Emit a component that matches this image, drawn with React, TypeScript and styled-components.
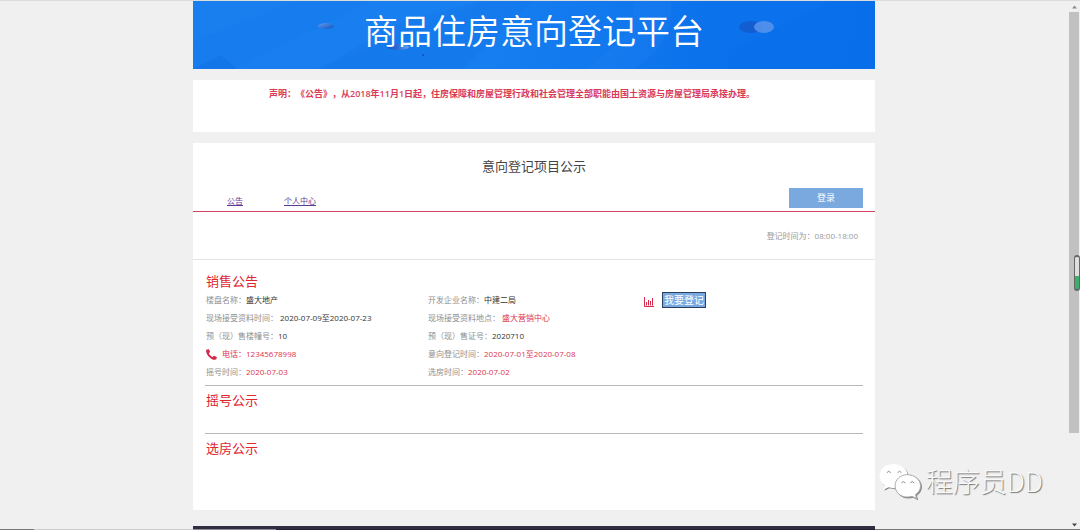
import React from "react";
import styled, { createGlobalStyle } from "styled-components";

const Global = createGlobalStyle`
  *, *::before, *::after { box-sizing: border-box; }
  html, body { margin: 0; padding: 0; }
  body {
    background: #f0f0f0;
    font-family: "Open Sans", "Noto Sans CJK SC", sans-serif;
    font-size: 8px;
    line-height: 18px;
    color: #444;
    text-spacing-trim: space-all;
  }
  h1, h2, h3, p, dl, dt, dd { margin: 0; font-weight: 400; }
`;

const Screen = styled.div`
  position: relative;
  min-height: 100vh;
  display: flex;
  flex-direction: column;
  border-top: 1px solid #dcdcdc;
`;

const Viewport = styled.div`
  flex: 1;
  display: flex;
`;

const Page = styled.div`
  flex: 1;
  min-width: 0;
  display: flex;
  flex-direction: column;
  align-items: center;
`;

const Column = styled.div`
  width: 100%;
  max-width: 682px;
  flex: 1;
  display: flex;
  flex-direction: column;
  gap: 11px;
`;

const Banner = styled.header`
  position: relative;
  overflow: hidden;
  background: linear-gradient(100deg, #177cee 0%, #167ef0 45%, #0c72ec 75%, #0a70ec 100%);
  padding: 4px 0 14px;
`;

const BannerArt = styled.svg`
  position: absolute;
  inset: 0;
  width: 100%;
  height: 100%;
`;

const BannerTitle = styled.h1`
  position: relative;
  text-align: center;
  font-family: "Noto Sans CJK SC", sans-serif;
  font-size: 34px;
  line-height: 50px;
  font-weight: 350;
  color: #fff;
`;

const Notice = styled.section`
  background: #fff;
  padding: 5px 76px 29px;
  font-size: 9px;
  font-weight: 600;
  color: #d93a58;
`;

const Panel = styled.main`
  background: #fff;
  padding-bottom: 52px;
`;

const PanelTitle = styled.h2`
  padding: 13px 0 12px;
  text-align: center;
  font-size: 13px;
  line-height: 20px;
`;

const Nav = styled.nav`
  display: flex;
  align-items: flex-end;
  gap: 41px;
  padding: 0 12px 3px 34px;
  border-bottom: 1px solid #d4425f;
`;

const NavLink = styled.a`
  line-height: 14px;
  color: #5a3a94;
  text-decoration: underline;
`;

const LoginButton = styled.button`
  margin-left: auto;
  width: 74px;
  height: 20px;
  padding: 0;
  border: 0;
  background: #7aa9df;
  color: #fff;
  font: inherit;
  font-size: 9px;
  cursor: pointer;
`;

const Hours = styled.p`
  padding: 15px 17px 14px;
  border-bottom: 1px solid #e4e4e4;
  text-align: right;
  color: #999;
`;

const Body = styled.div`
  padding: 11px 12px 0;
`;

const Section = styled.section<{ $divided?: boolean }>`
  padding: ${(p) => (p.$divided ? "4px 1px 0" : "0 1px")};
  border-top: ${(p) => (p.$divided ? "1px solid #bdb7ba" : "0")};
  & + & { margin-top: 4px; }
  & + & + & { margin-top: 23px; }
`;

const SectionTitle = styled.h3`
  font-size: 13px;
  line-height: 20px;
  color: #e0262f;
`;

const Details = styled.div`
  display: grid;
  grid-template-columns: 222px 216px 1fr;
`;

const Facts = styled.dl``;

const Fact = styled.div<{ $spaced?: boolean }>`
  display: flex;
  align-items: center;
  height: 18px;
  gap: ${(p) => (p.$spaced ? "2px" : "0")};
`;

const Label = styled.dt<{ $accent?: boolean }>`
  display: flex;
  align-items: center;
  gap: 5px;
  color: ${(p) => (p.$accent ? "#dc3350" : "#8f8f8f")};
`;

const Value = styled.dd<{ $accent?: boolean }>`
  color: ${(p) => (p.$accent ? "#dc3350" : "#333")};
`;

const Actions = styled.div`
  display: flex;
  align-items: flex-start;
  gap: 8px;
  padding-top: 1px;
`;

const ChartIcon = styled.svg`
  width: 10px;
  height: 10px;
  margin-top: 5px;
`;

const RegisterButton = styled.button`
  height: 16px;
  padding: 0 1px;
  border: 1px solid #2c3f5c;
  background: #7aa9df;
  color: #fff;
  font: inherit;
  font-size: 10px;
  line-height: 14px;
  cursor: pointer;
`;

const Footer = styled.footer`
  height: 3px;
  margin-top: 5px;
  background: #2e2d42;
`;

const Track = styled.div`
  width: 12px;
  display: flex;
  flex-direction: column;
  align-items: center;
  padding: 4px 0 2px;
  gap: 3px;
  background: #f0f0f0;
`;

const Thumb = styled.div`
  width: 10px;
  flex: 1;
  margin-bottom: 87px;
  background: #c1c1c1;
`;

const Gauge = styled.div`
  position: absolute;
  right: 0;
  top: 254px;
  width: 6px;
  height: 36px;
  border: 1px solid #666;
  border-width: 2px 1px;
  border-radius: 3px;
  background: linear-gradient(#dedede 60%, #3fae6c 60%);
`;

const BottomEdge = styled.div`
  height: 1px;
  display: flex;
`;

const EdgePart = styled.div<{ $grow: number; $tone: string }>`
  flex: ${(p) => p.$grow} 0 0;
  background: ${(p) => p.$tone};
`;

const Watermark = styled.div`
  position: absolute;
  right: 37px;
  bottom: 29px;
  display: flex;
  align-items: center;
  gap: 5px;
  font-family: "Noto Sans CJK SC", sans-serif;
  font-size: 27px;
  line-height: 40px;
  font-weight: 300;
  color: #f8f8f8;
  text-shadow: 1px 1px 1px #777;
`;

const WeChat = styled.svg`
  width: 42px;
  height: 37px;
  filter: drop-shadow(1px 1px 0 #888);
`;

type FactData = {
  label: string;
  value: string;
  accent?: boolean;
  spaced?: boolean;
  phone?: boolean;
};

const projectFacts: FactData[] = [
  { label: "楼盘名称：", value: "盛大地产" },
  { label: "现场接受资料时间：", value: "2020-07-09至2020-07-23", spaced: true },
  { label: "预（现）售楼幢号：", value: "10" },
  { label: "电话：", value: "12345678998", accent: true, phone: true },
  { label: "摇号时间：", value: "2020-07-03", accent: true },
];

const companyFacts: FactData[] = [
  { label: "开发企业名称：", value: "中建二局" },
  { label: "现场接受资料地点：", value: "盛大营销中心", accent: true, spaced: true },
  { label: "预（现）售证号：", value: "2020710" },
  { label: "意向登记时间：", value: "2020-07-01至2020-07-08", accent: true },
  { label: "选房时间：", value: "2020-07-02", accent: true },
];

const PhoneIcon = () => (
  <svg width="11" height="11" viewBox="0 0 11 11" aria-hidden="true">
    <path
      d="M0.6 0.6 L3 0.2 L4.1 3.1 L2.9 4.2 C3.5 5.9 5 7.3 6.7 8 L7.9 6.8 L10.8 8 L10.4 10.3 C9.6 11 7.6 11 5.6 9.9 C2.5 8.3 0 4.6 0.1 1.6 Z"
      fill="#d5294b"
    />
  </svg>
);

const FactList = ({ items }: { items: FactData[] }) => (
  <Facts>
    {items.map((item) => (
      <Fact key={item.label} $spaced={item.spaced}>
        <Label $accent={item.phone}>
          {item.phone && <PhoneIcon />}
          {item.label}
        </Label>
        <Value $accent={item.accent}>{item.value}</Value>
      </Fact>
    ))}
  </Facts>
);

const Arrow = ({ down }: { down?: boolean }) => (
  <svg width="5" height="4" viewBox="0 0 5 4" aria-hidden="true">
    <path d={down ? "M0 0.5H5L2.5 3.5Z" : "M0 3.5H5L2.5 0.5Z"} fill={down ? "#444" : "#8c8c8c"} />
  </svg>
);

export default function App() {
  return (
    <>
      <Global />
      <Screen>
        <Viewport>
          <Page>
            <Column>
              <Banner>
                <BannerArt viewBox="0 0 682 68" preserveAspectRatio="none" aria-hidden="true">
                  <defs>
                    <linearGradient id="pill" x1="0" x2="1">
                      <stop offset="0" stopColor="#1558c8" />
                      <stop offset="0.5" stopColor="#2e6cd4" />
                      <stop offset="1" stopColor="#6ea4f2" />
                    </linearGradient>
                    <linearGradient id="disc" x1="0" x2="1" y1="0" y2="1">
                      <stop offset="0" stopColor="#5f9df2" />
                      <stop offset="1" stopColor="#0f52bd" />
                    </linearGradient>
                  </defs>
                  <path d="M0 0H100L60 18L0 40Z" fill="#1f86f0" opacity="0.3" />
                  <path d="M178 0H295L230 25L125 68H40Z" fill="#2388f5" opacity="0.2" />
                  <path d="M125 68L210 20L290 0H340L270 68Z" fill="#0d6fe2" opacity="0.2" />
                  <path d="M440 0C445 30 415 52 392 68H440C475 48 480 20 478 0Z" fill="#2d8cf5" opacity="0.18" />
                  <path d="M535 50L640 0H682V68H535Z" fill="#0668e4" opacity="0.2" />
                  <path d="M0 68L28 54L44 68Z" fill="#0862d6" opacity="0.25" />
                  <ellipse cx="133" cy="25" rx="8" ry="3" fill="url(#disc)" />
                  <ellipse cx="205" cy="46" rx="11" ry="3" fill="url(#pill)" />
                  <ellipse cx="558" cy="26" rx="12" ry="6" fill="#1558c8" opacity="0.75" />
                  <ellipse cx="571" cy="26" rx="10" ry="6" fill="#5c97ee" opacity="0.8" />
                  <circle cx="230" cy="54" r="1" fill="#0c4fae" />
                </BannerArt>
                <BannerTitle>商品住房意向登记平台</BannerTitle>
              </Banner>

              <Notice>
                声明：《公告》，从2018年11月1日起，住房保障和房屋管理行政和社会管理全部职能由国土资源与房屋管理局承接办理。
              </Notice>

              <Panel>
                <PanelTitle>意向登记项目公示</PanelTitle>
                <Nav>
                  <NavLink href="#notice">公告</NavLink>
                  <NavLink href="#profile">个人中心</NavLink>
                  <LoginButton type="button">登录</LoginButton>
                </Nav>
                <Hours>登记时间为：08:00-18:00</Hours>
                <Body>
                  <Section>
                    <SectionTitle>销售公告</SectionTitle>
                    <Details>
                      <FactList items={projectFacts} />
                      <FactList items={companyFacts} />
                      <Actions>
                        <ChartIcon viewBox="0 0 10 10" aria-hidden="true">
                          <path d="M0.5 0V9.5H10" stroke="#d5294b" fill="none" />
                          <path d="M2.5 5V8.5M4.5 3V8.5M6.5 4V8.5M8.5 1V8.5" stroke="#d5294b" />
                        </ChartIcon>
                        <RegisterButton type="button">我要登记</RegisterButton>
                      </Actions>
                    </Details>
                  </Section>
                  <Section $divided>
                    <SectionTitle>摇号公示</SectionTitle>
                  </Section>
                  <Section $divided>
                    <SectionTitle>选房公示</SectionTitle>
                  </Section>
                </Body>
              </Panel>
              <Footer />
            </Column>
          </Page>
          <Track>
            <Arrow />
            <Thumb />
            <Arrow down />
          </Track>
        </Viewport>
        <BottomEdge>
          <EdgePart $grow={34} $tone="#777" />
          <EdgePart $grow={159} $tone="#ccc" />
          <EdgePart $grow={83} $tone="#8c8a98" />
          <EdgePart $grow={599} $tone="#241f35" />
          <EdgePart $grow={205} $tone="#777" />
        </BottomEdge>

        <Gauge />
        <Watermark>
          <WeChat viewBox="0 0 43 37" aria-hidden="true">
            <path
              d="M15 0.5C6.8 0.5 0.5 6 0.5 13C0.5 17 2.6 20.3 6 22.6L4.5 27L9.7 24.5C11.4 25 13.2 25.3 15 25.3C23 25.3 29.5 20 29.5 13C29.5 6 23 0.5 15 0.5Z"
              fill="#fff"
            />
            <path
              d="M29 11.5C21.8 11.5 16.5 16.5 16.5 23C16.5 29.4 22 34.4 29 34.4C30.7 34.4 32.3 34.1 33.8 33.6L38.5 36L37.3 32C40.5 29.9 42.5 26.7 42.5 23C42.5 16.5 36.2 11.5 29 11.5Z"
              fill="#fff"
              stroke="#aaa"
              strokeWidth="1"
            />
            <path
              d="M8 9.5Q10 6.5 12 9.5M19 9.5Q21 6.5 23 9.5M23 20Q25 17 27 20M32 20Q34 17 36 20"
              fill="none"
              stroke="#888"
              strokeWidth="1"
            />
          </WeChat>
          程序员DD
        </Watermark>
      </Screen>
    </>
  );
}
